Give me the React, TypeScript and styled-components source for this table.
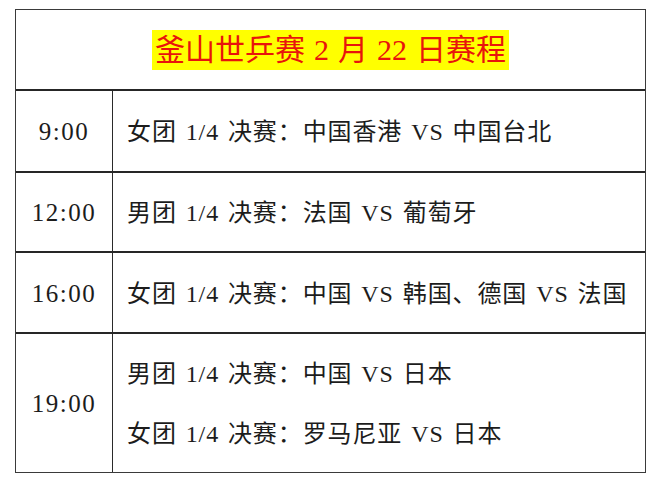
import React from 'react';
import styled, { createGlobalStyle } from 'styled-components';

type Match = {
    time: string;
    games: string[];
    height: number;
};

const MATCHES: Match[] = [
    { time: '9:00', games: ['女团 1/4 决赛：中国香港 VS 中国台北'], height: 82 },
    { time: '12:00', games: ['男团 1/4 决赛：法国 VS 葡萄牙'], height: 80 },
    { time: '16:00', games: ['女团 1/4 决赛：中国 VS 韩国、德国 VS 法国'], height: 81 },
    { time: '19:00', games: ['男团 1/4 决赛：中国 VS 日本', '女团 1/4 决赛：罗马尼亚 VS 日本'], height: 140 },
];

const GlobalStyle = createGlobalStyle`
    html, body {
        margin: 0;
        padding: 0;
        background: #ffffff;
    }
    body {
        font-family: 'Liberation Serif', 'Noto Sans CJK SC', serif;
        color: #1c1c1c;
    }
`;

const Page = styled.div`
    width: 660px;
    height: 481px;
    padding: 9px 0 0 15px;
    box-sizing: border-box;
`;

const Table = styled.div`
    width: 631px;
    border: 1px solid #3a3a3a;
    box-sizing: border-box;
    display: flex;
    flex-direction: column;
`;

const Header = styled.div`
    height: 79px;
    display: flex;
    align-items: center;
    justify-content: center;
`;

const Title = styled.span`
    background: #ffff00;
    color: #e8140c;
    font-size: 30px;
    line-height: 40px;
    height: 40px;
    padding: 0 3px;
    word-spacing: 0.05em;
    white-space: nowrap;
`;

const Row = styled.div<{ $height: number }>`
    display: grid;
    grid-template-columns: 97px 1fr;
    height: ${(props) => props.$height}px;
    border-top: 2px solid #262626;
    box-sizing: border-box;
`;

const Time = styled.div`
    display: flex;
    align-items: center;
    justify-content: center;
    border-right: 1px solid #2a2a2a;
    font-size: 25px;
    letter-spacing: 1.5px;
    padding-top: 2px;
`;

const Games = styled.div<{ $multi?: boolean }>`
    display: flex;
    flex-direction: column;
    justify-content: center;
    gap: ${(props) => (props.$multi ? '36px' : '0')};
    padding: 2px 0 0 14px;
`;

const Game = styled.div`
    font-size: 24px;
    line-height: 24px;
    word-spacing: 2px;
    letter-spacing: 0.9px;
    white-space: nowrap;
`;

const App: React.FC = () => {
    return (
        <>
            <GlobalStyle />
            <Page>
                <Table>
                    <Header>
                        <Title>釜山世乒赛 2 月 22 日赛程</Title>
                    </Header>
                    {MATCHES.map((m) => (
                        <Row key={m.time} $height={m.height}>
                            <Time>{m.time}</Time>
                            <Games $multi={m.games.length > 1}>
                                {m.games.map((g) => (
                                    <Game key={g}>{g}</Game>
                                ))}
                            </Games>
                        </Row>
                    ))}
                </Table>
            </Page>
        </>
    );
};

export default App;
